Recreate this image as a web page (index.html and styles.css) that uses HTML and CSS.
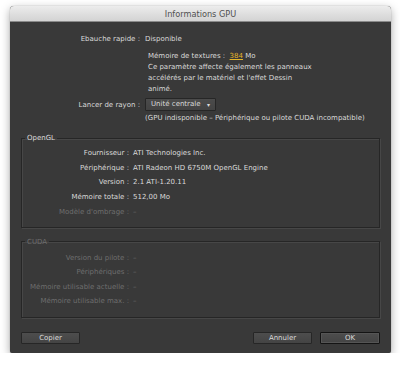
FILE: index.html
```html
<!DOCTYPE html>
<html lang="fr">

<head>
    <meta charset="UTF-8" />
    <title>Informations GPU</title>
    <link rel="stylesheet" href="styles.css">
</head>

<body>
    <div class="window">
        <div class="titlebar">Informations GPU</div>

        <div class="content">
            <div class="row top-row">
                <span class="label">Ebauche rapide :</span>
                <span class="value">Disponible</span>
            </div>

            <div class="texture">
                <div>Mémoire de textures :&nbsp; <span class="scrub">384</span> Mo</div>
                <p>Ce paramètre affecte également les panneaux<br>accélérés par le matériel et l'effet Dessin<br>animé.</p>
            </div>

            <div class="row ray-row">
                <span class="label">Lancer de rayon :</span>
                <span class="select">Unité centrale <span class="arrow">▾</span></span>
            </div>
            <div class="note">(GPU indisponible – Périphérique ou pilote CUDA incompatible)</div>

            <fieldset class="group opengl">
                <legend>OpenGL</legend>
                <div class="grid">
                    <span class="label">Fournisseur :</span><span>ATI Technologies Inc.</span>
                    <span class="label">Périphérique :</span><span>ATI Radeon HD 6750M OpenGL Engine</span>
                    <span class="label">Version :</span><span>2.1 ATI-1.20.11</span>
                    <span class="label">Mémoire totale :</span><span>512,00 Mo</span>
                    <span class="label dim">Modèle d'ombrage :</span><span class="dim">–</span>
                </div>
            </fieldset>

            <fieldset class="group cuda dim">
                <legend>CUDA</legend>
                <div class="grid">
                    <span class="label">Version du pilote :</span><span>–</span>
                    <span class="label">Périphériques :</span><span>–</span>
                    <span class="label">Mémoire utilisable actuelle :</span><span>–</span>
                    <span class="label">Mémoire utilisable max. :</span><span>–</span>
                </div>
            </fieldset>

            <div class="buttons">
                <button class="btn">Copier</button>
                <div class="spacer"></div>
                <button class="btn">Annuler</button>
                <button class="btn default">OK</button>
            </div>
        </div>
    </div>
</body>

</html>
```

FILE: styles.css
```css
:root {
    --panel: #393939;
    --text: #dadada;
    --dim-text: #6e6e6e;
    --line-dark: #262626;
    --line-light: #474747;
    --accent: #e3b52a;
}

* {
    margin: 0;
    padding: 0;
    box-sizing: border-box;
}

body {
    background: #ffffff;
    font-family: "DejaVu Sans", sans-serif;
    font-size: 7px;
    color: var(--text);
}

.window {
    width: 381px;
    height: 347px;
    margin: 6px 0 0 10px;
    background: var(--panel);
    border-radius: 4px 4px 2px 2px;
    box-shadow: 0 3px 10px rgba(0, 0, 0, 0.35), 0 0 1px rgba(0, 0, 0, 0.4);
    overflow: hidden;
}

.titlebar {
    height: 16px;
    line-height: 16px;
    text-align: center;
    font-size: 8.2px;
    color: #505050;
    background: linear-gradient(#ececec, #d3d3d3);
    border-bottom: 1px solid #8a8a8a;
}

.content {
    padding: 11px 11px 0 11px;
}

.row {
    display: flex;
    align-items: center;
}

.row .label {
    width: 119px;
    text-align: right;
    margin-right: 5px;
}

.top-row {
    height: 12px;
}

.texture {
    margin: 6px 0 0 127px;
    line-height: 11px;
}

.scrub {
    color: var(--accent);
    text-decoration: underline;
}

.ray-row {
    margin-top: 3px;
    height: 13px;
}

.select {
    width: 71px;
    height: 13px;
    line-height: 11px;
    padding-left: 5px;
    background: linear-gradient(#4b4b4b, #434343);
    border: 1px solid var(--line-dark);
    border-radius: 1px;
    position: relative;
}

.arrow {
    position: absolute;
    right: 5px;
    top: 0;
    font-size: 6px;
}

.note {
    margin: 1px 0 0 124px;
    line-height: 12px;
}

.group {
    margin-top: 8px;
    border: 1px solid var(--line-dark);
    box-shadow: inset 1px 1px 0 var(--line-light), 1px 1px 0 var(--line-light);
    padding: 0 0 7px 0;
}

.group legend {
    margin-left: 3px;
    padding: 0 2px;
    line-height: 12px;
}

.cuda {
    margin-top: 8px;
    padding-bottom: 8px;
}

.grid {
    display: grid;
    grid-template-columns: 107px 1fr;
    column-gap: 4px;
    line-height: 14.7px;
    padding-top: 2px;
}

.grid .label {
    text-align: right;
}

.cuda .grid {
    padding-top: 3px;
    line-height: 14.5px;
}

.dim,
.dim legend {
    color: var(--dim-text);
}

.buttons {
    display: flex;
    gap: 8px;
    margin-top: 14px;
}

.spacer {
    flex: 1;
}

.btn {
    width: 59px;
    height: 12px;
    font-family: inherit;
    font-size: 7px;
    color: var(--text);
    background: linear-gradient(#4d4d4d, #444444);
    border: 1px solid var(--line-dark);
    border-radius: 1px;
}

.btn.default {
    width: 60px;
    border-color: #141414;
    box-shadow: inset 0 0 0 1px #555555;
}
```
